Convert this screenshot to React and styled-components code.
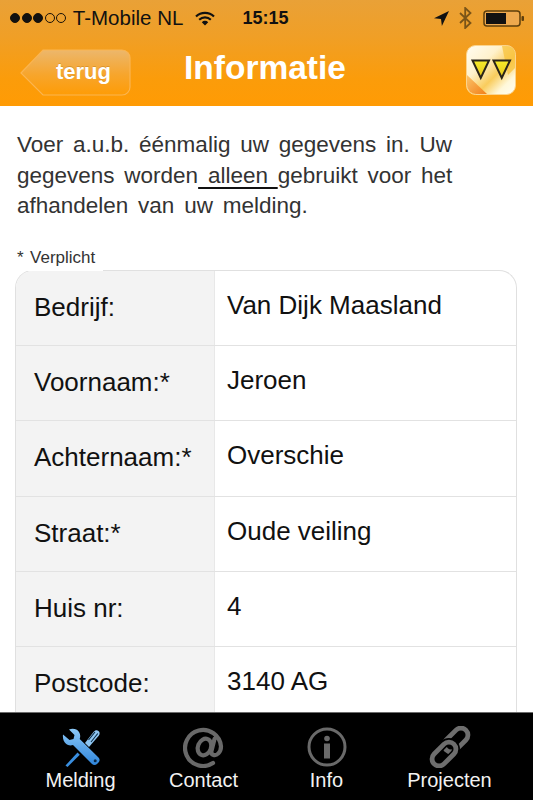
import React from "react";
import styled, { createGlobalStyle } from "styled-components";

const GlobalStyle = createGlobalStyle`
  html, body {
    margin: 0;
    padding: 0;
    background: #fff;
  }
  * {
    box-sizing: border-box;
  }
`;

const Page = styled.div`
  width: 533px;
  height: 800px;
  overflow: hidden;
  display: flex;
  flex-direction: column;
  font-family: "Liberation Sans", Arial, sans-serif;
  background: #fff;
`;

const Header = styled.header`
  height: 106px;
  flex: none;
  background: linear-gradient(to bottom, #e9a137 0%, #f09f26 35%, #fb9c0a 75%, #ff9b04 100%);
`;

const StatusBar = styled.div`
  height: 34px;
  padding: 2px 8px 0 10px;
  display: flex;
  align-items: center;
  color: #111;
  font-size: 20.5px;
`;

const Dots = styled.div`
  display: flex;
  gap: 1.5px;
  width: 63px;
`;

const Dot = styled.span`
  width: 10px;
  height: 10px;
  border-radius: 50%;
  border: 1px solid #1a1208;
  background: ${(p) => (p.$on ? "#111" : "transparent")};
`;

const Carrier = styled.span`
  width: 122px;
`;

const Clock = styled.span`
  margin-left: 28px;
  font-weight: bold;
  font-size: 18px;
  width: 192px;
`;

const StatusIcon = styled.svg`
  flex: none;
  display: block;
  margin-left: ${(p) => p.$gap || 0}px;
`;

const NavBar = styled.div`
  height: 72px;
  padding: 0 17px 0 20px;
  display: grid;
  grid-template-columns: 1fr auto 1fr;
  align-items: start;
`;

const BackButton = styled.button`
  position: relative;
  width: 111px;
  height: 47px;
  margin-top: 15px;
  padding: 0 0 2px 36px;
  border: 0;
  background: none;
  color: #fff;
  font-family: inherit;
  font-weight: bold;
  font-size: 22px;
  text-align: left;
  text-shadow: 0 -1px 0 rgba(150, 90, 0, 0.3);
`;

const BackShape = styled.svg`
  position: absolute;
  left: 0;
  top: 0;
`;

const BackLabel = styled.span`
  position: relative;
`;

const Title = styled.h1`
  margin: 12px 6px 0 0;
  font-size: 33.5px;
  line-height: 44px;
  font-weight: bold;
  color: #fff;
`;

const Logo = styled.svg`
  display: block;
  justify-self: end;
  margin-top: 11px;
`;

const Content = styled.main`
  flex: 1;
  min-height: 0;
  overflow: hidden;
  padding: 24px 16px 0 15px;
`;

const Intro = styled.p`
  margin: 0 0 0 2px;
  font-size: 22.5px;
  line-height: 30.5px;
  word-spacing: 3.5px;
  color: #333;
`;

const IntroLine = styled.span`
  display: block;
  white-space: pre;
`;

const Underlined = styled.span`
  text-decoration: underline;
  text-underline-offset: 4px;
  text-decoration-color: #111;
`;

const Required = styled.div`
  position: relative;
  z-index: 1;
  width: 88px;
  height: 23px;
  margin: 26.5px 0 -1px 0;
  padding: 0 0 0 2px;
  background: #fff;
  font-size: 17px;
  line-height: 20px;
  word-spacing: -1.5px;
  color: #333;
  white-space: pre;
`;

const Table = styled.div`
  border: 1px solid #e0e0e0;
  border-bottom: 0;
  border-radius: 18px 18px 0 0;
  overflow: hidden;
`;

const Row = styled.div`
  display: grid;
  grid-template-columns: 199px 1fr;
  height: 75.2px;
  border-bottom: 1px solid #e2e2e2;
`;

const Label = styled.div`
  background: #f3f3f3;
  border-right: 1px solid #e8e8e8;
  padding: 21px 0 0 18px;
  font-size: 26px;
  line-height: 30px;
  color: #111;
`;

const Value = styled.div`
  padding: 19px 0 0 12px;
  font-size: 26px;
  line-height: 30px;
  color: #111;
`;

const TabBar = styled.nav`
  flex: none;
  height: 88px;
  background: #000;
  border-top: 1px solid #6b6b6b;
  display: grid;
  grid-template-columns: repeat(4, 123px);
  padding-left: 19px;
`;

const Tab = styled.div`
  display: flex;
  flex-direction: column;
  align-items: center;
  padding-top: 13px;
`;

const TabIcon = styled.svg`
  display: block;
  height: 42px;
`;

const TabLabel = styled.span`
  margin-top: 1px;
  font-size: 20px;
  line-height: 22px;
  color: #f2f2f2;
`;

function Signal() {
  return (
    <Dots>
      {[1, 1, 1, 0, 0].map((on, i) => (
        <Dot key={i} $on={on === 1} />
      ))}
    </Dots>
  );
}

function WifiIcon() {
  return (
    <StatusIcon width="20" height="15" viewBox="0 0 20 15">
      <path d="M1 5.5a13 13 0 0 1 18 0" fill="none" stroke="#111" strokeWidth="2.2" />
      <path d="M4.2 8.7a8.5 8.5 0 0 1 11.6 0" fill="none" stroke="#111" strokeWidth="2.2" />
      <path d="M6.8 11.2 10 14.6l3.2-3.4a4.4 4.4 0 0 0-6.4 0z" fill="#111" />
    </StatusIcon>
  );
}

function LocationIcon() {
  return (
    <StatusIcon width="15" height="15" viewBox="0 0 15 15">
      <path d="M15 0 0 7.2l7 .9.9 6.9z" fill="#111" />
    </StatusIcon>
  );
}

function BluetoothIcon() {
  return (
    <StatusIcon $gap={10} width="13" height="22" viewBox="0 0 13 22">
      <path d="M1 6l10.5 10L6.2 21V1l5.3 5L1 16" fill="none" stroke="#7a5418" strokeWidth="1.8" />
    </StatusIcon>
  );
}

function BatteryIcon() {
  return (
    <StatusIcon $gap={11} width="42" height="17" viewBox="0 0 42 17">
      <rect x="1" y="1" width="36" height="15" rx="3" fill="#eea94e" stroke="#5e3f0d" strokeWidth="1.5" />
      <rect x="3" y="3" width="20" height="11" fill="#111" />
      <rect x="38.5" y="6" width="2.5" height="5" rx="1" fill="#5e3f0d" />
    </StatusIcon>
  );
}

function BackBackground() {
  return (
    <BackShape width="111" height="47" viewBox="0 0 111 47">
      <defs>
        <linearGradient id="backFill" x1="0" y1="0" x2="0" y2="1">
          <stop offset="0" stopColor="#ecb76c" />
          <stop offset="0.55" stopColor="#f7a52c" />
          <stop offset="1" stopColor="#fe9c06" />
        </linearGradient>
      </defs>
      <path
        d="M1 24 23 1h79a8 8 0 0 1 8 8v29a8 8 0 0 1-8 8H23z"
        fill="url(#backFill)"
        stroke="#fbb551"
        strokeWidth="1.2"
      />
    </BackShape>
  );
}

function AppLogo() {
  return (
    <Logo width="50" height="50" viewBox="0 0 50 50">
      <defs>
        <linearGradient id="logoBase" x1="0" y1="0" x2="1" y2="1">
          <stop offset="0" stopColor="#fffdf2" />
          <stop offset="0.35" stopColor="#fff2cc" />
          <stop offset="0.6" stopColor="#f9cc5c" />
          <stop offset="0.8" stopColor="#fff8da" />
          <stop offset="1" stopColor="#fffef4" />
        </linearGradient>
        <linearGradient id="logoTri" x1="0" y1="0" x2="0" y2="1">
          <stop offset="0" stopColor="#f7ec2a" />
          <stop offset="1" stopColor="#e6c41c" />
        </linearGradient>
        <linearGradient id="logoOrange" x1="0" y1="0" x2="1" y2="1">
          <stop offset="0" stopColor="#fbc46a" />
          <stop offset="1" stopColor="#f27f18" />
        </linearGradient>
      </defs>
      <rect x="0.5" y="0.5" width="49" height="49" rx="9" fill="url(#logoBase)" stroke="#fcd48c" />
      <path d="M1 30 21 49H10a9 9 0 0 1-9-9z" fill="url(#logoOrange)" />
      <path d="M36 1h5a8 8 0 0 1 8 8v14L42 30z" fill="#f8c33c" opacity="0.75" />
      <path d="M6.500 15.500h16.500l-8.250 17.500z" fill="url(#logoTri)" stroke="#2a2418" strokeWidth="2" />
      <path d="M27.500 15.500h16.500l-8.250 17.500z" fill="url(#logoTri)" stroke="#2a2418" strokeWidth="2" />
    </Logo>
  );
}

function ToolsIcon() {
  return (
    <TabIcon width="42" height="42" viewBox="0 0 42 42">
      <defs>
        <linearGradient id="toolBlue" x1="0" y1="0" x2="0" y2="1">
          <stop offset="0" stopColor="#8cc8f7" />
          <stop offset="1" stopColor="#2f86dc" />
        </linearGradient>
      </defs>
      <path d="M5.500 39.500 17.500 26.500l2.300 2.200L7.500 41z" fill="#3a8fe0" />
      <path d="M25 17 33.500 6c1.500-1.800 3.500-2.300 5-1 1.500 1.300 1.500 3.200.2 4.800L29 21z" fill="#8fc6f2" />
      <path d="M28.500 14 35 6M31 16l6.800-8.500" stroke="#0a2a44" strokeWidth="1.100" fill="none" />
      <path
        d="M3 8.500 9.500 14l4-1 1-4L9 3.500c4-1.500 8-.5 10 2.500 1.500 2.300 1.500 4.800.7 7L38.500 31.500c1.500 1.500 1.500 3.500 0 5l-1.500 1.500c-1.500 1.400-3.500 1.400-5 0L13 19c-2.500.8-5 .5-7-1.200C3.500 15.500 2.500 12 3 8.500z"
        fill="url(#toolBlue)"
      />
      <circle cx="35.200" cy="34.800" r="1.500" fill="#0b2b4a" />
    </TabIcon>
  );
}

function AtIcon() {
  return (
    <TabIcon width="42" height="42" viewBox="0 0 42 42">
      <g fill="none" stroke="#696969" strokeWidth="4.200" strokeLinecap="round">
        <path d="M30 37A18 18 0 1 1 38 20.500C38 26.500 33.500 30 30.500 29C28.500 28.400 28 26.800 28.500 25L31.500 13" />
        <ellipse cx="21.500" cy="21" rx="6.500" ry="8.500" transform="rotate(22 21.500 21)" />
      </g>
    </TabIcon>
  );
}

function InfoIcon() {
  return (
    <TabIcon width="42" height="42" viewBox="0 0 42 42">
      <circle cx="21" cy="21" r="18" fill="none" stroke="#6a6a6a" strokeWidth="3" />
      <circle cx="21" cy="12.500" r="2.800" fill="#6a6a6a" />
      <rect x="18" y="17.500" width="6" height="15" fill="#6a6a6a" />
    </TabIcon>
  );
}

function LinkIcon() {
  return (
    <TabIcon width="42" height="42" viewBox="0 0 42 42">
      <g fill="none" stroke="#6e6e6e" strokeWidth="4.800">
        <rect x="13" y="7" width="28" height="14" rx="7" transform="rotate(-45 27 14)" />
        <rect x="1" y="21" width="28" height="14" rx="7" transform="rotate(-45 15 28)" stroke="#000" strokeWidth="8" />
        <rect x="1" y="21" width="28" height="14" rx="7" transform="rotate(-45 15 28)" />
      </g>
    </TabIcon>
  );
}

const rows = [
  ["Bedrijf:", "Van Dijk Maasland"],
  ["Voornaam:*", "Jeroen"],
  ["Achternaam:*", "Overschie"],
  ["Straat:*", "Oude veiling"],
  ["Huis nr:", "4"],
  ["Postcode:", "3140 AG"],
];

const tabs = [
  ["Melding", ToolsIcon],
  ["Contact", AtIcon],
  ["Info", InfoIcon],
  ["Projecten", LinkIcon],
];

export default function App() {
  return (
    <Page>
      <GlobalStyle />
      <Header>
        <StatusBar>
          <Signal />
          <Carrier>T-Mobile NL</Carrier>
          <WifiIcon />
          <Clock>15:15</Clock>
          <LocationIcon />
          <BluetoothIcon />
          <BatteryIcon />
        </StatusBar>
        <NavBar>
          <BackButton>
            <BackBackground />
            <BackLabel>terug</BackLabel>
          </BackButton>
          <Title>Informatie</Title>
          <AppLogo />
        </NavBar>
      </Header>
      <Content>
        <Intro>
          <IntroLine>Voer a.u.b. éénmalig uw gegevens in. Uw</IntroLine>
          <IntroLine>
            gegevens worden<Underlined> alleen </Underlined>gebruikt voor het
          </IntroLine>
          <IntroLine>afhandelen van uw melding.</IntroLine>
        </Intro>
        <Required>{"*  Verplicht"}</Required>
        <Table>
          {rows.map(([label, value]) => (
            <Row key={label}>
              <Label>{label}</Label>
              <Value>{value}</Value>
            </Row>
          ))}
        </Table>
      </Content>
      <TabBar>
        {tabs.map(([label, Icon]) => (
          <Tab key={label}>
            <Icon />
            <TabLabel>{label}</TabLabel>
          </Tab>
        ))}
      </TabBar>
    </Page>
  );
}
